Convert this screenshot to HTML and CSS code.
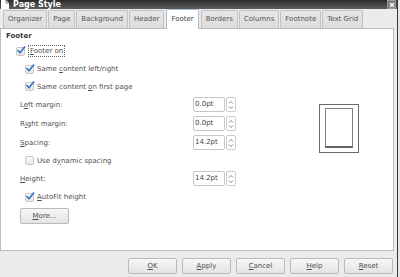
FILE: index.html
```html
<!DOCTYPE html>
<html lang="en">
<head>
    <meta charset="UTF-8">
    <title>Page Style</title>
    <link rel="stylesheet" href="styles.css">
</head>
<body>
    <div class="dialog">
        <div class="titlebar">
            <svg class="app-icon" width="10" height="9" viewBox="0 0 10 9">
                <path d="M1 0 H6 L9 3 V9 H1 Z" fill="#fff"/>
                <path d="M6 0 V3 H9" fill="none" stroke="#777" stroke-width="1"/>
            </svg>
            <span class="title">Page Style</span>
            <span class="close">
                <svg width="6" height="6" viewBox="0 0 6 6"><path d="M1 1 L5 5 M5 1 L1 5" stroke="#fff" stroke-width="1.3"/></svg>
            </span>
        </div>

        <div class="tabs">
            <span class="tab">Organizer</span>
            <span class="tab">Page</span>
            <span class="tab">Background</span>
            <span class="tab">Header</span>
            <span class="tab active">Footer</span>
            <span class="tab">Borders</span>
            <span class="tab">Columns</span>
            <span class="tab">Footnote</span>
            <span class="tab">Text Grid</span>
        </div>

        <div class="panel">
            <div class="form">
                <div class="section">Footer</div>

                <div class="row check-row level1">
                    <span class="box checked"><svg width="10" height="10" viewBox="0 0 10 10"><path d="M1.5 5 L4 7.8 L9 1.5" fill="none" stroke="#3b72c4" stroke-width="1.7"/></svg></span>
                    <span class="focus"><u>F</u>ooter on</span>
                </div>
                <div class="row check-row level2">
                    <span class="box checked"><svg width="10" height="10" viewBox="0 0 10 10"><path d="M1.5 5 L4 7.8 L9 1.5" fill="none" stroke="#3b72c4" stroke-width="1.7"/></svg></span>
                    <span>Same <u>c</u>ontent left/right</span>
                </div>
                <div class="row check-row level2 short">
                    <span class="box checked"><svg width="10" height="10" viewBox="0 0 10 10"><path d="M1.5 5 L4 7.8 L9 1.5" fill="none" stroke="#3b72c4" stroke-width="1.7"/></svg></span>
                    <span>Same content <u>o</u>n first page</span>
                </div>

                <div class="row field-row">
                    <span class="label">L<u>e</u>ft margin:</span>
                    <span class="spin"><span class="spin-input">0.0pt</span><span class="spin-btn"><svg width="6" height="10" viewBox="0 0 6 10"><path d="M1 3.5 L3 1.5 L5 3.5 M1 6.5 L3 8.5 L5 6.5" fill="none" stroke="#777" stroke-width="0.9"/></svg></span></span>
                </div>
                <div class="row field-row">
                    <span class="label">R<u>i</u>ght margin:</span>
                    <span class="spin"><span class="spin-input">0.0pt</span><span class="spin-btn"><svg width="6" height="10" viewBox="0 0 6 10"><path d="M1 3.5 L3 1.5 L5 3.5 M1 6.5 L3 8.5 L5 6.5" fill="none" stroke="#777" stroke-width="0.9"/></svg></span></span>
                </div>
                <div class="row field-row">
                    <span class="label"><u>S</u>pacing:</span>
                    <span class="spin"><span class="spin-input">14.2pt</span><span class="spin-btn"><svg width="6" height="10" viewBox="0 0 6 10"><path d="M1 3.5 L3 1.5 L5 3.5 M1 6.5 L3 8.5 L5 6.5" fill="none" stroke="#777" stroke-width="0.9"/></svg></span></span>
                </div>

                <div class="row check-row level2 short">
                    <span class="box"></span>
                    <span>Use d<u>y</u>namic spacing</span>
                </div>

                <div class="row field-row">
                    <span class="label"><u>H</u>eight:</span>
                    <span class="spin"><span class="spin-input">14.2pt</span><span class="spin-btn"><svg width="6" height="10" viewBox="0 0 6 10"><path d="M1 3.5 L3 1.5 L5 3.5 M1 6.5 L3 8.5 L5 6.5" fill="none" stroke="#777" stroke-width="0.9"/></svg></span></span>
                </div>

                <div class="row check-row level2">
                    <span class="box checked"><svg width="10" height="10" viewBox="0 0 10 10"><path d="M1.5 5 L4 7.8 L9 1.5" fill="none" stroke="#3b72c4" stroke-width="1.7"/></svg></span>
                    <span><u>A</u>utoFit height</span>
                </div>

                <div class="more-row">
                    <span class="button more"><u>M</u>ore...</span>
                </div>
            </div>

            <div class="preview">
                <div class="page">
                    <div class="page-footer"></div>
                </div>
            </div>
        </div>

        <div class="buttons">
            <span class="button"><u>O</u>K</span>
            <span class="button"><u>A</u>pply</span>
            <span class="button"><u>C</u>ancel</span>
            <span class="button"><u>H</u>elp</span>
            <span class="button"><u>R</u>eset</span>
        </div>
    </div>
</body>
</html>
```

FILE: styles.css
```css
        body {
            margin: 0;
            padding: 0;
            background-color: #e6e6e6;
            font-family: "DejaVu Sans", sans-serif;
            font-size: 7px;
            color: #505050;
        }

        u {
            text-decoration: underline;
            text-underline-offset: 1px;
        }

        .dialog {
            width: 397px;
            height: 277px;
            background-color: #ebebeb;
            border-right: 1px solid #3a3a3a;
            display: flex;
            flex-direction: column;
            overflow: hidden;
        }

        .titlebar {
            height: 9px;
            flex: none;
            background: linear-gradient(#2c2c2c, #5c5c5c);
            display: flex;
            align-items: center;
            overflow: hidden;
        }

        .title {
            margin-left: 3px;
            font-size: 8px;
            font-weight: bold;
            color: #fff;
            line-height: 9px;
        }

        .close {
            margin-left: auto;
            margin-right: 1px;
            width: 7px;
            height: 7px;
            background-color: #7a7a7a;
            border: 1px solid #999;
            display: flex;
            align-items: center;
            justify-content: center;
        }

        .tabs {
            height: 19px;
            flex: none;
            display: flex;
            align-items: flex-end;
            padding-left: 3px;
            gap: 1px;
        }

        .tab {
            height: 17px;
            line-height: 17px;
            padding: 0 4px;
            background: linear-gradient(#e6e6e6, #dcdcdc);
            border: 1px solid #c2c2c2;
            border-bottom: none;
            border-radius: 2px 2px 0 0;
            color: #555;
            white-space: nowrap;
        }

        .tab.active {
            height: 19px;
            line-height: 19px;
            margin: 0 1px;
            background: #fff;
            border-color: #a9bcd2;
            color: #444;
            position: relative;
            top: 1px;
        }

        .panel {
            height: 221px;
            flex: none;
            margin-right: 3px;
            background-color: #fff;
            border: 1px solid #bcbcbc;
            display: grid;
            grid-template-columns: 318px 1fr;
        }

        .form {
            display: flex;
            flex-direction: column;
        }

        .section {
            height: 11px;
            line-height: 11px;
            padding-top: 2px;
            padding-left: 5px;
            font-weight: bold;
            color: #3a3a3a;
        }

        .row {
            display: flex;
            align-items: center;
            white-space: nowrap;
        }

        .check-row {
            height: 18px;
        }

        .check-row.short {
            height: 17px;
        }

        .level1 {
            padding-left: 15px;
        }

        .level2 {
            padding-left: 24px;
        }

        .box {
            width: 7px;
            height: 7px;
            border: 1px solid #c8c8c8;
            border-radius: 2px;
            background: linear-gradient(#fafafa, #e8e8e8);
            margin-right: 3px;
            position: relative;
            flex: none;
        }

        .box svg {
            position: absolute;
            left: -1px;
            top: -3px;
        }

        .level1 .box {
            margin-right: 4px;
        }

        .focus {
            border: 1px dotted #666;
            padding: 0 1px;
            line-height: 10px;
            margin-left: -1px;
        }

        .field-row {
            height: 19px;
            padding-left: 19px;
        }

        .label {
            width: 173px;
        }

        .spin {
            display: flex;
            gap: 1px;
        }

        .spin-input {
            width: 29px;
            height: 13px;
            line-height: 13px;
            padding-left: 1px;
            border: 1px solid #c6c6c6;
            border-radius: 2px;
            color: #444;
        }

        .spin-btn {
            width: 8px;
            height: 13px;
            border: 1px solid #cccccc;
            border-radius: 2px;
            display: flex;
            align-items: center;
            justify-content: center;
        }

        .more-row {
            padding-left: 19px;
            padding-top: 2px;
        }

        .button {
            display: inline-block;
            width: 47px;
            height: 14px;
            line-height: 14px;
            text-align: center;
            border: 1px solid #bababa;
            border-radius: 2px;
            background: linear-gradient(#f7f7f7, #e4e4e4);
            color: #505050;
        }

        .preview {
            padding-top: 75px;
        }

        .page {
            width: 28px;
            height: 40px;
            border: 1px solid #6a6a6a;
            padding: 3px 5px 4px 5px;
        }

        .page-footer {
            width: 26px;
            height: 37px;
            border: 1px solid #808080;
            border-bottom: 2px solid #666;
        }

        .buttons {
            flex: 1;
            display: flex;
            justify-content: flex-end;
            align-items: flex-start;
            gap: 5px;
            padding-top: 7px;
            padding-right: 4px;
        }
```
